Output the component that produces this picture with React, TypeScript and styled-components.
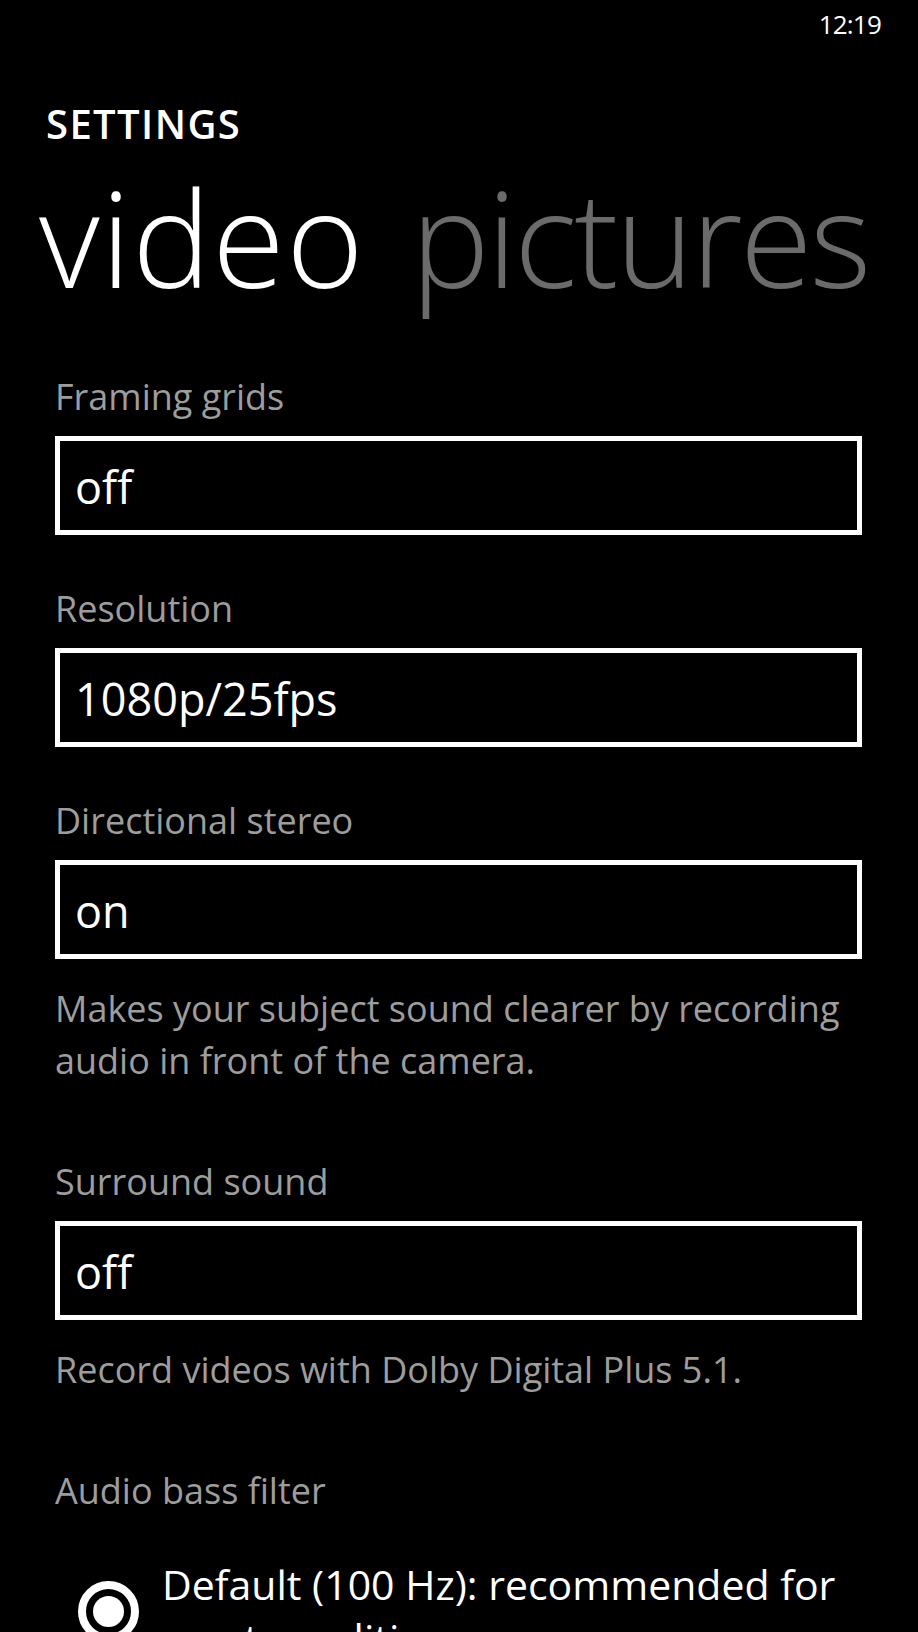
import React, { FC } from 'react'
import styled, { createGlobalStyle } from 'styled-components'

const GlobalStyle = createGlobalStyle`
  html, body {
    margin: 0;
    padding: 0;
    background: #000;
  }
  body {
    font-family: 'Open Sans', 'Noto Sans', 'DejaVu Sans', sans-serif;
    color: #fff;
  }
`

type Setting = {
  label: string
  value: string
  description?: string
}

const settings: Setting[] = [
  { label: 'Framing grids', value: 'off' },
  { label: 'Resolution', value: '1080p/25fps' },
  {
    label: 'Directional stereo',
    value: 'on',
    description:
      'Makes your subject sound clearer by recording audio in front of the camera.',
  },
  {
    label: 'Surround sound',
    value: 'off',
    description: 'Record videos with Dolby Digital Plus 5.1.',
  },
]

const App: FC = () => (
  <>
    <GlobalStyle />
    <Screen>
      <StatusBar>
        <Clock>12:19</Clock>
      </StatusBar>

      <AppTitle>SETTINGS</AppTitle>
      <Pivot>
        <PivotItem active>video</PivotItem>
        <PivotItem>pictures</PivotItem>
      </Pivot>

      <List>
        {settings.map(s => (
          <Section key={s.label}>
            <Label>{s.label}</Label>
            <Picker>{s.value}</Picker>
            {s.description && <Description>{s.description}</Description>}
          </Section>
        ))}

        <Section>
          <Label>Audio bass filter</Label>
          <RadioRow>
            <Radio checked />
            <RadioText>Default (100 Hz): recommended for most conditions</RadioText>
          </RadioRow>
        </Section>
      </List>
    </Screen>
  </>
)

export default App

const Screen = styled.div`
  width: 918px;
  height: 1632px;
  overflow: hidden;
  background: #000;
`

const StatusBar = styled.div`
  box-sizing: border-box;
  height: 50px;
  padding: 11px 37px 0 0;
  display: flex;
  justify-content: flex-end;
`

const Clock = styled.span`
  font-size: 26px;
  line-height: 27px;
  letter-spacing: -0.8px;
`

const AppTitle = styled.div`
  margin: 50px 0 0 46px;
  font-size: 40px;
  line-height: 48px;
  font-weight: 600;
  letter-spacing: 1.4px;
`

const Pivot = styled.div`
  display: flex;
  gap: 46px;
  margin: 23px 0 0 39px;
  white-space: nowrap;
`

const PivotItem = styled.span<{ active?: boolean }>`
  font-size: 132px;
  line-height: 132px;
  font-weight: 300;
  letter-spacing: ${p => (p.active ? '1.4px' : '-2.6px')};
  color: ${p => (p.active ? '#fff' : '#6b6b6b')};
`

const List = styled.div`
  margin-top: 74px;
  padding: 0 56px 0 55px;
  display: flex;
  flex-direction: column;
`

const Section = styled.div`
  display: flex;
  flex-direction: column;
  margin-bottom: 54px;
`

const Label = styled.div`
  font-size: 36px;
  line-height: 40px;
  color: #9d9d9d;
  margin-bottom: 19px;
`

const Picker = styled.div`
  box-sizing: border-box;
  height: 99px;
  border: 5px solid #fff;
  padding: 2px 0 0 15px;
  font-size: 45px;
  line-height: 87px;
  color: #fff;
`

const Description = styled.p`
  margin: 24px 0 21px;
  font-size: 36px;
  line-height: 52px;
  color: #9d9d9d;
`

const RadioRow = styled.div`
  display: flex;
  align-items: center;
  gap: 23px;
  margin: 27px 0 0 23px;
`

const Radio = styled.span<{ checked?: boolean }>`
  box-sizing: border-box;
  flex: none;
  width: 61px;
  height: 61px;
  border: 8px solid #fff;
  border-radius: 50%;
  display: flex;
  align-items: center;
  justify-content: center;

  &::after {
    content: '';
    width: 31px;
    height: 31px;
    border-radius: 50%;
    background: ${p => (p.checked ? '#fff' : 'transparent')};
  }
`

const RadioText = styled.div`
  font-size: 41px;
  line-height: 54px;
  color: #fff;
`
